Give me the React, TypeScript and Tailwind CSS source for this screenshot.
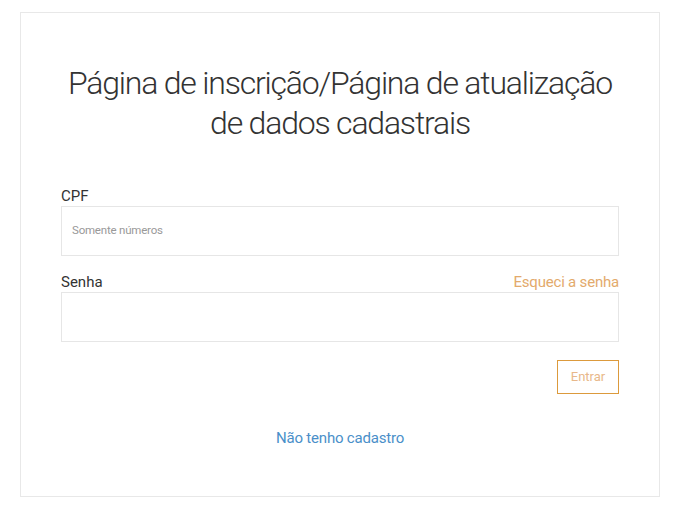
import React from "react";

export default function App() {
  return (
    <div className="w-[677px] h-[516px] bg-white pt-[12px] pl-[20px]" style={{ fontFamily: "Roboto, 'Open Sans', sans-serif" }}>
      <div className="w-[640px] h-[485px] border border-[#e8e8e8] px-[40px] pt-[50px]">
        <h1 className="text-center text-[32px] leading-[40px] font-light text-[#333] tracking-[-1.2px] whitespace-nowrap">
          Página de inscrição/Página de atualização
          <br />
          de dados cadastrais
        </h1>
        <div className="mt-[43px]">
          <label className="block text-[15px] leading-[20px] text-[#333]">CPF</label>
          <div className="h-[50px] border border-[#e6e6e6] flex items-center px-[10px]">
            <span className="text-[11.5px] text-[#999] tracking-[-0.2px]">Somente números</span>
          </div>
        </div>
        <div className="mt-[16px]">
          <div className="flex justify-between items-end">
            <label className="block text-[15px] leading-[20px] text-[#333]">Senha</label>
            <span className="text-[15px] leading-[20px] text-[#e3aa6c] tracking-[-0.2px]">Esqueci a senha</span>
          </div>
          <div className="h-[50px] border border-[#e6e6e6]"></div>
        </div>
        <div className="flex justify-end mt-[18px]">
          <button className="w-[62px] h-[34px] border border-[#dc9a3c] text-[13px] text-[#e8b88a] bg-white">
            Entrar
          </button>
        </div>
        <div className="text-center mt-[32px]">
          <span className="text-[15px] text-[#4a8fc9] tracking-[-0.2px]">Não tenho cadastro</span>
        </div>
      </div>
    </div>
  );
}
